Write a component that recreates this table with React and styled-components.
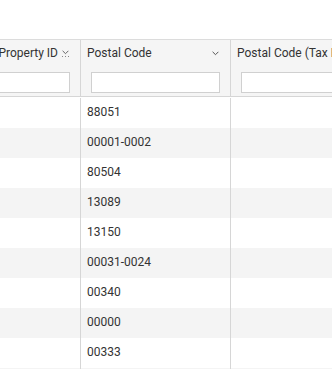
import React from "react";
import styled, { createGlobalStyle } from "styled-components";

const Global = createGlobalStyle`
  html, body { margin: 0; padding: 0; background: #fff; }
  body { font-family: Roboto, "Open Sans", sans-serif; }
`;

const Page = styled.div`
  width: 332px;
  height: 369px;
  overflow: hidden;
  background: #fff;
`;

const TopSpace = styled.div`
  height: 39px;
`;

/* horizontally scrolled grid: first column partly out of view */
const Table = styled.div`
  margin-left: -69px;
  width: max-content;
`;

const COLS = "150px 150px 150px";

const HeaderRow = styled.div`
  display: grid;
  grid-template-columns: ${COLS};
  height: 58px;
  box-sizing: border-box;
  background: #f5f5f5;
  border-top: 1px solid #dcdcdc;
  border-bottom: 1px solid #d6d6d6;
`;

const HeaderCell = styled.div`
  display: flex;
  flex-direction: column;
  box-sizing: border-box;
  border-right: 1px solid #d6d6d6;
  padding-top: 5px;
  min-width: 0;
`;

const TitleLine = styled.div`
  display: flex;
  align-items: center;
  height: 16px;
  padding: 0 11px 0 6px;
  gap: 4px;
`;

const Title = styled.span`
  flex: 1;
  font-size: 12px;
  color: #333;
  white-space: nowrap;
  overflow: hidden;
  line-height: 16px;
  text-align: ${(p) => (p.$end ? "right" : "left")};
`;

const IconBox = styled.span`
  flex: none;
  display: flex;
  align-items: center;
  color: #555;
`;

const FilterInput = styled.input`
  margin: 11px 10px 0 10px;
  height: 21px;
  box-sizing: border-box;
  border: 1px solid #d0d0d0;
  background: #fff;
  border-radius: 0;
  padding: 0 4px;
  outline: none;
  font-family: inherit;
  font-size: 12px;
  min-width: 0;
`;

const Body = styled.div`
  padding-top: 1px;
`;

const Row = styled.div`
  display: grid;
  grid-template-columns: ${COLS};
  height: 30px;
  background: ${(p) => (p.$alt ? "#f4f4f4" : "#ffffff")};
`;

const Cell = styled.div`
  box-sizing: border-box;
  border-right: 1px solid #d6d6d6;
  padding: 0 6px 2px 6px;
  display: flex;
  align-items: center;
  font-size: 12px;
  color: #333;
  white-space: nowrap;
  overflow: hidden;
`;

const Chevron = () => (
  <svg width="7" height="5" viewBox="0 0 7 5">
    <path d="M0.6 0.8 L3.5 3.7 L6.4 0.8" fill="none" stroke="#555" strokeWidth="1" />
  </svg>
);

const SortIcon = () => (
  <svg width="7" height="10" viewBox="0 0 7 10">
    <path d="M0.6 2.8 L3.5 5.7 L6.4 2.8" fill="none" stroke="#666" strokeWidth="1" />
    <rect x="0" y="8" width="1" height="1" fill="#888" />
    <rect x="3" y="8" width="1" height="1" fill="#888" />
    <rect x="6" y="8" width="1" height="1" fill="#888" />
  </svg>
);

const columns = [
  { title: "Property ID", icon: <SortIcon />, end: true },
  { title: "Postal Code", icon: <Chevron /> },
  { title: "Postal Code (Tax Bill)", icon: <Chevron /> },
];

const codes = [
  "88051",
  "00001-0002",
  "80504",
  "13089",
  "13150",
  "00031-0024",
  "00340",
  "00000",
  "00333",
  "",
];

export default function App() {
  return (
    <Page>
      <Global />
      <TopSpace />
      <Table>
        <HeaderRow>
          {columns.map((c) => (
            <HeaderCell key={c.title}>
              <TitleLine>
                <Title $end={c.end}>{c.title}</Title>
                <IconBox>{c.icon}</IconBox>
              </TitleLine>
              <FilterInput type="text" />
            </HeaderCell>
          ))}
        </HeaderRow>
        <Body>
          {codes.map((code, i) => (
            <Row key={i} $alt={i % 2 === 1}>
              <Cell />
              <Cell>{code}</Cell>
              <Cell />
            </Row>
          ))}
        </Body>
      </Table>
    </Page>
  );
}
